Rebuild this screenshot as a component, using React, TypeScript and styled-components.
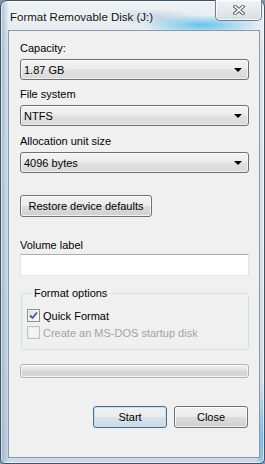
import React from 'react'
import styled, { createGlobalStyle } from 'styled-components'

const GlobalStyle = createGlobalStyle`
  html, body {
    margin: 0;
    padding: 0;
    background: #7d95ab;
  }
  body {
    font-family: 'Liberation Sans', Arial, sans-serif;
    font-size: 11px;
    color: #000;
  }
  * {
    box-sizing: border-box;
  }
`

const Window = styled.div`
  width: 265px;
  height: 464px;
  display: flex;
  flex-direction: column;
  padding: 0 4px 5px 7px;
  border: 1px solid #46535e;
  border-radius: 7px 7px 5px 5px;
  background:
    radial-gradient(ellipse 60px 10px at 200px 24px, rgba(60, 180, 235, 0.75), rgba(60, 180, 235, 0) 100%),
    radial-gradient(ellipse 50px 8px at 150px 16px, rgba(120, 160, 200, 0.35), rgba(120, 160, 200, 0) 100%),
    radial-gradient(ellipse 8px 60px at 262px 440px, rgba(70, 170, 230, 0.7), rgba(70, 170, 230, 0) 100%),
    linear-gradient(90deg, rgba(110, 150, 190, 0.55) 0px, rgba(110, 150, 190, 0) 8px),
    linear-gradient(180deg, #eef2f5 0%, #dfe7ee 10%, #d7e2ea 60%, #cbdae6 100%);
  box-shadow: inset 0 0 0 1px rgba(255, 255, 255, 0.6);
`

const TitleBar = styled.div`
  height: 29px;
  display: flex;
  align-items: flex-start;
  flex-shrink: 0;
`

const Title = styled.div`
  padding: 9px 0 0 2px;
  font-size: 11.5px;
  line-height: 14px;
  color: #101010;
  text-shadow: 0 0 6px #fff, 0 0 3px #fff;
`

const CloseButton = styled.div`
  margin-left: auto;
  margin-right: -2px;
  margin-top: -1px;
  width: 47px;
  height: 21px;
  display: flex;
  align-items: center;
  justify-content: center;
  border: 1px solid #6f7d89;
  border-top: none;
  border-radius: 0 0 5px 5px;
  background: linear-gradient(180deg, #f1f4f6 0%, #e4e9ed 50%, #d6dee4 100%);
  box-shadow: inset 0 0 0 1px rgba(255, 255, 255, 0.7);
`

const Client = styled.div`
  flex: 1;
  display: flex;
  flex-direction: column;
  padding: 10px 10px 0 11px;
  background: #f0f0f0;
  border: 1px solid #8c99a4;
`

const Field = styled.div<{ $mt?: number; $gap?: number }>`
  display: flex;
  flex-direction: column;
  gap: ${(p) => p.$gap ?? 4}px;
  margin-top: ${(p) => p.$mt ?? 0}px;
`

const Label = styled.div`
  line-height: 14px;
  height: 14px;
  color: #000;
`

const Combo = styled.div`
  height: 21px;
  display: flex;
  align-items: center;
  padding: 0 6px 0 3px;
  border: 1px solid #707070;
  border-radius: 3px;
  background: linear-gradient(180deg, #f3f3f3 0%, #ececec 45%, #e1e1e1 55%, #d9d9d9 100%);
  box-shadow: inset 0 0 0 1px rgba(255, 255, 255, 0.6);
`

const ComboText = styled.span`
  flex: 1;
  line-height: 14px;
`

const Arrow = styled.span`
  width: 0;
  height: 0;
  border-left: 4px solid transparent;
  border-right: 4px solid transparent;
  border-top: 4px solid #000;
`

const Button = styled.div<{ $width: number; $default?: boolean }>`
  width: ${(p) => p.$width}px;
  height: 22px;
  display: flex;
  align-items: center;
  justify-content: center;
  line-height: 14px;
  border: 1px solid ${(p) => (p.$default ? '#4b6b86' : '#707070')};
  border-radius: 3px;
  background: ${(p) =>
    p.$default
      ? 'linear-gradient(180deg, #eef2f5 0%, #e7edf1 48%, #d9e2e9 52%, #d0dae2 100%)'
      : 'linear-gradient(180deg, #f2f2f2 0%, #ebebeb 48%, #dddddd 52%, #cfcfcf 100%)'};
  box-shadow: inset 0 0 0 1px ${(p) => (p.$default ? 'rgba(190, 225, 245, 0.9)' : 'rgba(255, 255, 255, 0.7)')};
`

const TextBox = styled.div`
  height: 22px;
  background: #fff;
  border: 1px solid #dbdfe6;
  border-top-color: #abadb3;
  border-left-color: #e2e3ea;
  border-right-color: #e2e3ea;
  border-bottom-color: #e3e9ef;
`

const Group = styled.fieldset`
  margin: 10px 0 0 1px;
  padding: 8px 0 9px 5px;
  border: 1px solid #d5dfe5;
  border-radius: 3px;
  display: flex;
  flex-direction: column;
  gap: 2px;
  min-width: 0;
`

const Legend = styled.legend`
  margin-left: 5px;
  padding: 0 2px;
  line-height: 14px;
`

const CheckRow = styled.div<{ $disabled?: boolean }>`
  display: flex;
  align-items: center;
  gap: 3px;
  height: 15px;
  line-height: 14px;
  color: ${(p) => (p.$disabled ? '#a3a3a3' : '#000')};
`

const Box = styled.span<{ $disabled?: boolean }>`
  width: 13px;
  height: 13px;
  display: flex;
  align-items: center;
  justify-content: center;
  border: 1px solid ${(p) => (p.$disabled ? '#c4c4c4' : '#8e8f8f')};
  background: ${(p) =>
    p.$disabled ? '#f4f4f4' : 'linear-gradient(135deg, #dcdcdc 0%, #f0f0f0 50%, #ffffff 100%)'};
  box-shadow: inset 0 0 0 1px ${(p) => (p.$disabled ? '#ececec' : '#f4f4f4')};
`

const Progress = styled.div`
  margin-top: 14px;
  height: 14px;
  border: 1px solid #b2b2b2;
  border-radius: 3px;
  background: linear-gradient(180deg, #f3f3f3 0%, #e2e2e2 40%, #d3d3d3 60%, #dcdcdc 100%);
  box-shadow: inset 0 0 0 1px rgba(255, 255, 255, 0.6);
`

const ButtonRow = styled.div`
  margin-top: 28px;
  padding-right: 1px;
  display: flex;
  justify-content: flex-end;
  gap: 7px;
`

function Dropdown({ value }: { value: string }) {
  return (
    <Combo>
      <ComboText>{value}</ComboText>
      <Arrow />
    </Combo>
  )
}

export default function App() {
  return (
    <>
      <GlobalStyle />
      <Window>
        <TitleBar>
          <Title>Format Removable Disk (J:)</Title>
          <CloseButton>
            <svg width="12" height="10" viewBox="0 0 12 10">
              <path d="M2 1.5 L10 8.5 M10 1.5 L2 8.5" stroke="#59646e" strokeWidth="3.6" strokeLinecap="square" />
              <path d="M2 1.5 L10 8.5 M10 1.5 L2 8.5" stroke="#ffffff" strokeWidth="1.6" strokeLinecap="square" />
            </svg>
          </CloseButton>
        </TitleBar>
        <Client>
          <Field>
            <Label>Capacity:</Label>
            <Dropdown value="1.87 GB" />
          </Field>
          <Field $mt={7}>
            <Label>File system</Label>
            <Dropdown value="NTFS" />
          </Field>
          <Field $mt={8}>
            <Label>Allocation unit size</Label>
            <Dropdown value="4096 bytes" />
          </Field>
          <Field $mt={22}>
            <Button $width={132}>Restore device defaults</Button>
          </Field>
          <Field $mt={21} $gap={2}>
            <Label>Volume label</Label>
            <TextBox />
          </Field>
          <Group>
            <Legend>Format options</Legend>
            <CheckRow>
              <Box>
                <svg width="9" height="9" viewBox="0 0 9 9">
                  <path d="M1 4.5 L3.5 7 L8 1.5" stroke="#3f5a96" strokeWidth="1.8" fill="none" />
                </svg>
              </Box>
              Quick Format
            </CheckRow>
            <CheckRow $disabled>
              <Box $disabled />
              Create an MS-DOS startup disk
            </CheckRow>
          </Group>
          <Progress />
          <ButtonRow>
            <Button $width={74} $default>
              Start
            </Button>
            <Button $width={74}>Close</Button>
          </ButtonRow>
        </Client>
      </Window>
    </>
  )
}
